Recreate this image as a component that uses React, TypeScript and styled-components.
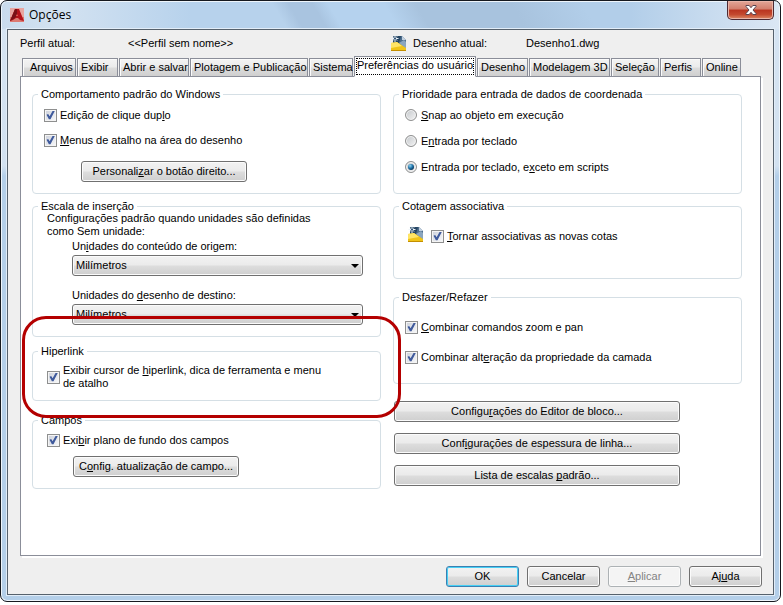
import React, { useId, useState } from "react";
import styled, { createGlobalStyle, css } from "styled-components";

const GlobalStyle = createGlobalStyle`
  *, *::before, *::after { box-sizing: border-box; }
  body {
    margin: 0;
    padding: 0 2px 3px 0;
    background: #fff;
    color: #000;
    font: 11px/13px "Liberation Sans", Arial, sans-serif;
  }
  button, input, select { font: inherit; color: inherit; margin: 0; }
  u { text-decoration: underline; text-underline-offset: 1px; text-decoration-thickness: 1px; text-decoration-skip-ink: none; }
`;

const Window = styled.div`
  display: flex;
  flex-direction: column;
  padding: 0 6px 6px;
  border: 1px solid #16191f;
  border-radius: 7px;
  box-shadow: inset 0 0 0 1px #eef5fb;
  background:
    linear-gradient(90deg, #c9dbed 0, #d3e2f1 60px, rgba(200, 219, 238, 0) 190px) 0 0 / 100% 28px no-repeat,
    linear-gradient(270deg, #dbe7f4 0, rgba(200, 219, 238, 0) 150px) 0 0 / 100% 28px no-repeat,
    linear-gradient(60deg, #b7d2ec 0 36%, #a9c4e0 38% 41%, #b5d2ee 43% 50%, #a8c3de 54% 66%, #b2cee9 75%) 0 0 / 100% 28px no-repeat,
    linear-gradient(180deg, #d6e4f2 0, #d2e1f0 165px, #b4cfe9 175px);
`;

const TitleBar = styled.header`
  display: flex;
  align-items: flex-start;
  height: 28px;
  padding-left: 3px;
`;

const TitleIcon = styled.svg`
  flex: none;
  width: 14px;
  height: 14px;
  margin-top: 7px;
`;

const Title = styled.h1`
  flex: 1;
  margin: 5px 0 0 5px;
  font: 12px/18px "Open Sans", "Noto Sans", sans-serif;
`;

const CloseButton = styled.button`
  display: grid;
  place-items: center;
  width: 47px;
  height: 19px;
  padding: 0;
  border: 1px solid #4c2a33;
  border-top: 0;
  border-radius: 0 0 5px 5px;
  box-shadow: inset 0 0 0 1px #e9b4a8;
  background: linear-gradient(#e2a698, #d27e6c 45%, #b93420 50%, #c4492f 75%, #dc8a66);
`;

const Client = styled.main`
  padding: 0 12px 7px;
  border: 1px solid #56616c;
  box-shadow: 0 0 0 1px #e2edf8;
  background: #efefef;
`;

const ProfileBar = styled.div`
  display: grid;
  grid-template-columns: 108px 263px 22px 113px 1fr;
  align-items: center;
  height: 26px;
`;

const TabStrip = styled.nav`
  display: flex;
  align-items: flex-end;
  height: 21px;
  margin: 0 0 -1px 2px;
`;

const Tab = styled.button<{ $width: number; $active?: boolean }>`
  flex: 0 1 ${(p) => p.$width}px;
  min-width: 0;
  height: 19px;
  padding: 0 0 0 3px;
  border: 1px solid #8b8e99;
  text-align: left;
  white-space: nowrap;
  background: linear-gradient(#f3f3f3, #ebebeb 48%, #dcdcdc 52%, #cfcfcf);
  box-shadow: inset 1px 1px #fbfbfb;
  &:first-child { padding-left: 7px; }
  & + & { margin-left: 1px; }
  ${(p) =>
    p.$active &&
    css`
      position: relative;
      height: 21px;
      padding: 0 0 3px;
      text-align: center;
      border-bottom-color: #fff;
      background: #fff;
      outline: 1px dotted #000;
      outline-offset: -3px;
    `}
`;

const Panel = styled.section`
  display: grid;
  grid-template-columns: 1fr 1fr;
  gap: 12px;
  padding: 11px 18px 66px 11px;
  border: 1px solid #8b8e99;
  box-shadow: 2px 2px #fff;
  background: #fff;
`;

const Column = styled.div`
  display: flex;
  flex-direction: column;
  min-width: 0;
`;

const Group = styled.fieldset<{ $bottom: number; $after: number }>`
  position: relative;
  min-width: 0;
  margin: 0 0 ${(p) => p.$after}px;
  padding: 0 0 ${(p) => p.$bottom}px;
  border: 1px solid #d5dfe5;
  border-radius: 4px;
`;

const Legend = styled.legend`
  height: 12px;
  margin-left: 5px;
  padding: 0 3px;
  line-height: 13px;
`;

const Stack = styled.div<{ $gap: number; $top: number; $left: number }>`
  display: flex;
  flex-direction: column;
  align-items: flex-start;
  gap: ${(p) => p.$gap}px;
  padding: ${(p) => p.$top}px 0 0 ${(p) => p.$left}px;
`;

const OptionRow = styled.label`
  display: flex;
  align-items: center;
  gap: 3px;
  min-height: 14px;
`;

const IconRow = styled.div`
  display: flex;
  align-items: flex-end;
  gap: 7px;
`;

const CheckInput = styled.input`
  flex: none;
  display: grid;
  place-items: center;
  width: 13px;
  height: 13px;
  appearance: none;
  border: 1px solid #8e8f8f;
  background: linear-gradient(135deg, #cfd3dc, #f5f6f8) content-box, #f4f4f4;
  padding: 1px;
  &:checked::after {
    content: "";
    width: 9px;
    height: 9px;
    background: #3f5a9c;
    clip-path: polygon(6% 46%, 24% 38%, 40% 64%, 76% 0, 100% 0, 50% 98%, 32% 98%);
  }
`;

const RadioInput = styled.input`
  flex: none;
  display: grid;
  place-items: center;
  width: 12px;
  height: 12px;
  margin-right: 1px;
  appearance: none;
  border: 1px solid #8e8f8f;
  border-radius: 50%;
  box-shadow: inset 0 0 0 1px #f4f4f4;
  background: linear-gradient(135deg, #c3c7cb, #f4f4f4);
  &:checked::after {
    content: "";
    width: 6px;
    height: 6px;
    border-radius: 50%;
    background: radial-gradient(circle at 35% 30%, #8fd4f2, #1c6ea4 45%, #0a2f50 80%);
  }
`;

const PushButton = styled.button<{ $width: number; $primary?: boolean }>`
  width: ${(p) => p.$width}px;
  max-width: 100%;
  height: 21px;
  padding: 0;
  border: 1px solid #707070;
  border-radius: 3px;
  box-shadow: inset 0 0 0 1px #fbfbfb;
  background: linear-gradient(#f2f2f2, #ebebeb 48%, #dddddd 52%, #cfcfcf);
  ${(p) =>
    p.$primary &&
    css`
      border-color: #3c7fb1;
      box-shadow: inset 0 0 0 1px #46d0f5;
    `}
  &:disabled {
    border-color: #adb2b5;
    background: #f4f4f4;
    color: #838383;
  }
`;

const Hint = styled.p`
  margin: 0;
  padding-left: 14px;
`;

const Field = styled.div`
  display: flex;
  flex-direction: column;
  gap: 2px;
  padding: 2px 17px 0 39px;
  & + & { padding-top: 13px; }
`;

const SelectFrame = styled.div`
  position: relative;
  display: flex;
`;

const Select = styled.select`
  flex: 1;
  height: 21px;
  padding: 0 20px 0 3px;
  appearance: none;
  border: 1px solid #707070;
  border-radius: 3px;
  box-shadow: inset 0 0 0 1px #fbfbfb;
  background: linear-gradient(#f2f2f2, #ebebeb 48%, #dddddd 52%, #cfcfcf);
`;

const SelectArrow = styled.svg`
  position: absolute;
  top: 9px;
  right: 4px;
  width: 8px;
  height: 4px;
  pointer-events: none;
`;

const Highlight = styled.div`
  position: absolute;
  z-index: 1;
  inset: -41px -21px -18px -11px;
  border: 3px solid #b40000;
  border-radius: 24px;
  pointer-events: none;
`;

const Footer = styled.footer`
  display: flex;
  justify-content: flex-end;
  gap: 8px;
  padding-top: 10px;
  margin-right: -1px;
`;

function DrawingIcon() {
  return (
    <svg width="16" height="17" viewBox="0 0 16 17" aria-hidden="true">
      <path d="M2 1h9l4 4v10H2z" fill="#4d6d8c" />
      <path d="M2 1h8l-2 7H2z" fill="#254563" />
      <path d="M11 1l4 4h-4z" fill="#c3d1df" />
      <path d="M8 8l5-3 2 2v7z" fill="#8aa5be" />
      <path d="M0 8l6-1 9 6v3H0z" fill="#f0c419" />
      <path d="M0 8l6-1 5 4-11 2z" fill="#ffe566" />
      <path d="M0 15h15v1H0z" fill="#c48f00" />
      <path d="M4 0v7M.5 3.500h7M2 1.500l4 4M6 1.500l-4 4" stroke="#eef5fb" strokeWidth="1" />
      <circle cx="4" cy="3.500" r="1" fill="#20456b" />
    </svg>
  );
}

interface OptionProps {
  children: React.ReactNode;
}

function CheckOption({ children }: OptionProps) {
  const id = useId();
  return (
    <OptionRow htmlFor={id}>
      <CheckInput id={id} type="checkbox" defaultChecked />
      <span>{children}</span>
    </OptionRow>
  );
}

function RadioOption({ children, selected }: OptionProps & { selected?: boolean }) {
  const id = useId();
  return (
    <OptionRow htmlFor={id}>
      <RadioInput id={id} type="radio" name="prioridade" defaultChecked={selected} />
      <span>{children}</span>
    </OptionRow>
  );
}

function UnitField({ children }: OptionProps) {
  const id = useId();
  return (
    <Field>
      <label htmlFor={id}>{children}</label>
      <SelectFrame>
        <Select id={id} defaultValue="mm">
          <option value="mm">Milímetros</option>
        </Select>
        <SelectArrow viewBox="0 0 8 4" aria-hidden="true">
          <path d="M0 0h8L4 4z" />
        </SelectArrow>
      </SelectFrame>
    </Field>
  );
}

const tabs = [
  { label: "Arquivos", width: 54 },
  { label: "Exibir", width: 41 },
  { label: "Abrir e salvar", width: 70 },
  { label: "Plotagem e Publicação", width: 118 },
  { label: "Sistema", width: 44 },
  { label: "Preferências do usuário", width: 122 },
  { label: "Desenho", width: 51 },
  { label: "Modelagem 3D", width: 81 },
  { label: "Seleção", width: 48 },
  { label: "Perfis", width: 41 },
  { label: "Online", width: 39 },
];

export default function App() {
  const [active, setActive] = useState("Preferências do usuário");
  return (
    <>
      <GlobalStyle />
      <Window>
        <TitleBar>
          <TitleIcon viewBox="0 0 14 14" aria-hidden="true">
            <path d="M0 0h14v14H0z" fill="#e9a5a0" />
            <path d="M0 9h14v5H0z" fill="#dc7a72" />
            <path d="M5 1h4l5 12-4-1-2-2H6l-3 2-3 1z" fill="#b3121a" />
            <path d="M5 1h2v6l-2 3-5 3z" fill="#7a1016" />
            <path d="M7 6l1 2H6z" fill="#e8655c" />
          </TitleIcon>
          <Title>Opções</Title>
          <CloseButton aria-label="Fechar">
            <svg width="12" height="10" viewBox="0 0 12 10" aria-hidden="true">
              <path d="M1 .5h3.200L6 2.700 7.800.5H11v1L8 5l3 3.500v1H7.800L6 7.300 4.200 9.500H1v-1L4 5 1 1.500z" fill="#fff" stroke="#5a4450" />
            </svg>
          </CloseButton>
        </TitleBar>
        <Client>
          <ProfileBar>
            <span>Perfil atual:</span>
            <span>&lt;&lt;Perfil sem nome&gt;&gt;</span>
            <DrawingIcon />
            <span>Desenho atual:</span>
            <span>Desenho1.dwg</span>
          </ProfileBar>
          <TabStrip role="tablist">
            {tabs.map((t) => (
              <Tab
                key={t.label}
                role="tab"
                aria-selected={t.label === active}
                $width={t.width}
                $active={t.label === active}
                onClick={() => setActive(t.label)}
              >
                {t.label}
              </Tab>
            ))}
          </TabStrip>
          <Panel>
            <Column>
              <Group $bottom={11} $after={6}>
                <Legend>Comportamento padrão do Windows</Legend>
                <Stack $top={8} $left={11} $gap={11}>
                  <CheckOption>Edição de clique dup<u>l</u>o</CheckOption>
                  <CheckOption><u>M</u>enus de atalho na área do desenho</CheckOption>
                </Stack>
                <Stack $top={14} $left={48} $gap={0}>
                  <PushButton $width={166}>Personali<u>z</u>ar o botão direito...</PushButton>
                </Stack>
              </Group>
              <Group $bottom={11} $after={8}>
                <Legend>Escala de inserção</Legend>
                <Hint>
                  Configurações padrão quando unidades são definidas
                  <br />
                  como Sem unidade:
                </Hint>
                <UnitField>Un<u>i</u>dades do conteúdo de origem:</UnitField>
                <UnitField>Unidades do <u>d</u>esenho de destino:</UnitField>
              </Group>
              <Group $bottom={10} $after={13}>
                <Legend>Hiperlink</Legend>
                <Stack $top={7} $left={14} $gap={0}>
                  <CheckOption>
                    Exibir cursor de <u>h</u>iperlink, dica de ferramenta e menu
                    <br />
                    de atalho
                  </CheckOption>
                </Stack>
                <Highlight />
              </Group>
              <Group $bottom={11} $after={0}>
                <Legend>Campos</Legend>
                <Stack $top={7} $left={14} $gap={0}>
                  <CheckOption>Exi<u>b</u>ir plano de fundo dos campos</CheckOption>
                </Stack>
                <Stack $top={9} $left={40} $gap={0}>
                  <PushButton $width={166}>C<u>o</u>nfig. atualização de campo...</PushButton>
                </Stack>
              </Group>
            </Column>
            <Column>
              <Group $bottom={19} $after={6}>
                <Legend>Prioridade para entrada de dados de coordenada</Legend>
                <Stack $top={8} $left={11} $gap={12}>
                  <RadioOption><u>S</u>nap ao objeto em execução</RadioOption>
                  <RadioOption>E<u>n</u>trada por teclado</RadioOption>
                  <RadioOption selected>Entrada por teclado, e<u>x</u>ceto em scripts</RadioOption>
                </Stack>
              </Group>
              <Group $bottom={35} $after={12}>
                <Legend>Cotagem associativa</Legend>
                <Stack $top={14} $left={14} $gap={0}>
                  <IconRow>
                    <DrawingIcon />
                    <CheckOption><u>T</u>ornar associativas as novas cotas</CheckOption>
                  </IconRow>
                </Stack>
              </Group>
              <Group $bottom={19} $after={17}>
                <Legend>Desfazer/Refazer</Legend>
                <Stack $top={17} $left={11} $gap={16}>
                  <CheckOption><u>C</u>ombinar comandos zoom e pan</CheckOption>
                  <CheckOption>Combinar alt<u>e</u>ração da propriedade da camada</CheckOption>
                </Stack>
              </Group>
              <Stack $top={0} $left={1} $gap={11}>
                <PushButton $width={286}>Configu<u>r</u>ações do Editor de bloco...</PushButton>
                <PushButton $width={286}>Conf<u>i</u>gurações de espessura de linha...</PushButton>
                <PushButton $width={286}>Lista de escalas <u>p</u>adrão...</PushButton>
              </Stack>
            </Column>
          </Panel>
          <Footer>
            <PushButton $width={73} $primary>OK</PushButton>
            <PushButton $width={73}>Cancelar</PushButton>
            <PushButton $width={73} disabled><u>A</u>plicar</PushButton>
            <PushButton $width={73}>Aj<u>u</u>da</PushButton>
          </Footer>
        </Client>
      </Window>
    </>
  );
}
